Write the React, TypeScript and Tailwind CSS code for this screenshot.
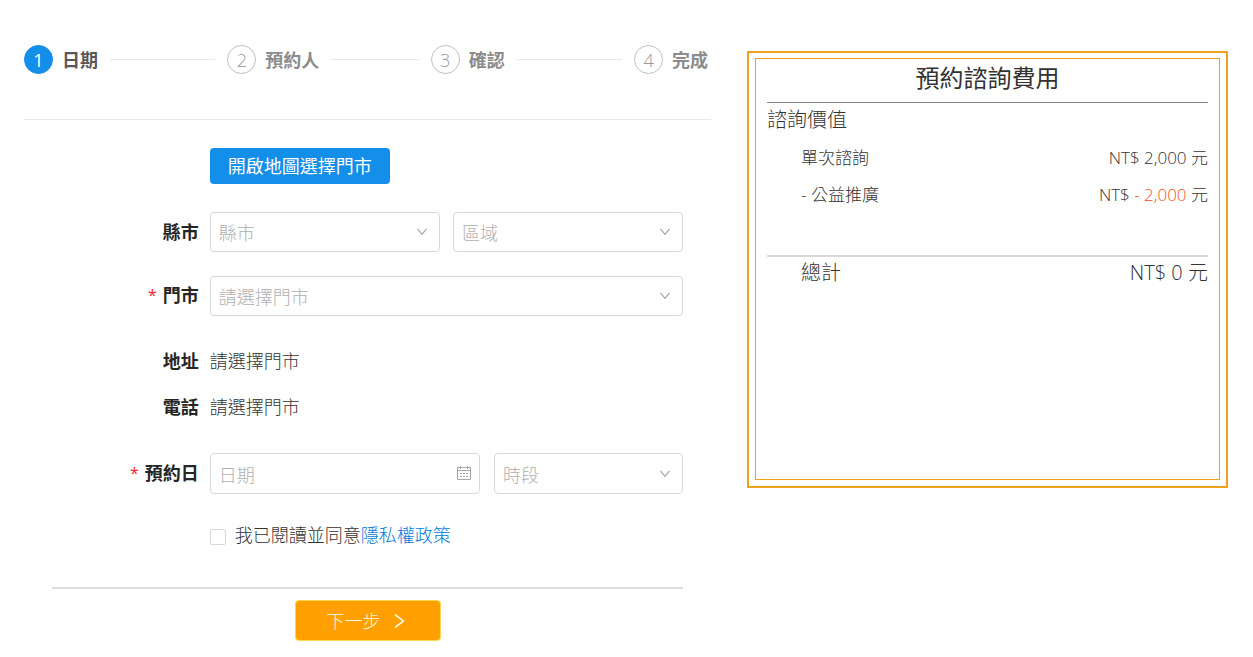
import clsx from "clsx";
import { useState } from "react";
import type { ReactNode } from "react";

const steps = ["日期", "預約人", "確認", "完成"];

const fieldClass =
  "w-full appearance-none rounded border border-[#d9d9d9] bg-white px-2 pt-0.5 font-light text-[#b0b0b0] outline-none transition focus:border-[#138ee9]";

function Steps({ current }: { current: number }) {
  return (
    <ol className="flex pr-[3px]">
      {steps.map((title, i) => (
        <li key={title} className={clsx("flex items-center", i < steps.length - 1 && "flex-1 basis-0")}>
          <span
            className={clsx(
              "flex size-[29px] shrink-0 items-center justify-center rounded-full border",
              i === current ? "border-[#138ee9] bg-[#138ee9] text-white" : "border-[#bfbfbf] font-light text-[#999999]"
            )}
          >
            {i + 1}
          </span>
          <span
            className={clsx(
              "ml-[9px] whitespace-nowrap font-bold",
              i === current ? "text-[#595959]" : "text-[#8c8c8c]"
            )}
          >
            {title}
          </span>
          {i < steps.length - 1 ? <span className="mx-3 h-px flex-1 bg-[#e8e8e8]" /> : null}
        </li>
      ))}
    </ol>
  );
}

function Row({ label, htmlFor, required, children }: { label?: string; htmlFor?: string; required?: boolean; children: ReactNode }) {
  return (
    <div className="grid grid-cols-[1fr_3fr] items-center">
      <div className="flex justify-end pr-[11px] font-bold text-[#262626]">
        {label ? (
          <label htmlFor={htmlFor} className={clsx("flex items-center gap-1.5", required && "pb-0.5")}>
            {required ? <span className="text-base font-normal leading-4 text-[#f5222d]">*</span> : null}
            {label}
          </label>
        ) : null}
      </div>
      {children}
    </div>
  );
}

function SelectBox({ id, placeholder, height = "h-10" }: { id: string; placeholder: string; height?: string }) {
  return (
    <div className="relative">
      <select id={id} aria-label={placeholder} defaultValue="" className={clsx(fieldClass, height)}>
        <option value="">{placeholder}</option>
      </select>
      <svg
        viewBox="0 0 12 12"
        fill="none"
        stroke="#a6a6a6"
        strokeWidth="1.2"
        className="pointer-events-none absolute right-3 top-1/2 size-3 -translate-y-1/2"
      >
        <path d="M1.5 2.8 6 8.4l4.5-5.6" />
      </svg>
    </div>
  );
}

function CalendarIcon() {
  return (
    <svg
      viewBox="0 0 16 16"
      fill="none"
      stroke="#a6a6a6"
      className="pointer-events-none absolute right-2 top-3 size-4"
    >
      <path d="M1.5 2.5h13v12h-13zM1.5 5.5h13M4.5 1v3M11.5 1v3" />
      <path d="M4 8.5h2M7 8.5h2M10 8.5h2M4 11.5h2M7 11.5h2M10 11.5h2" />
    </svg>
  );
}

function BookingForm() {
  const [agreed, setAgreed] = useState(false);

  return (
    <form className="px-7 pt-7" onSubmit={(e) => e.preventDefault()}>
      <Row>
        <div>
          <button type="button" className="h-9 rounded bg-[#138ee9] px-[18px] text-white">
            開啟地圖選擇門市
          </button>
        </div>
      </Row>
      <div className="mt-7 flex flex-col gap-6">
        <Row label="縣市" htmlFor="city">
          <div className="grid grid-cols-2 gap-[13px]">
            <SelectBox id="city" placeholder="縣市" />
            <SelectBox id="district" placeholder="區域" />
          </div>
        </Row>
        <Row label="門市" htmlFor="store" required>
          <SelectBox id="store" placeholder="請選擇門市" />
        </Row>
      </div>
      <div className="mb-8 mt-[31px] flex flex-col gap-[18px]">
        <Row label="地址">
          <p className="font-light text-[#333333]">請選擇門市</p>
        </Row>
        <Row label="電話">
          <p className="font-light text-[#333333]">請選擇門市</p>
        </Row>
      </div>
      <Row label="預約日" htmlFor="date" required>
        <div className="grid grid-cols-[10fr_7fr] gap-[14px]">
          <div className="relative">
            <input
              id="date"
              type="text"
              placeholder="日期"
              className={clsx(fieldClass, "h-[41px] placeholder:text-[#b0b0b0]")}
            />
            <CalendarIcon />
          </div>
          <SelectBox id="time" placeholder="時段" height="h-[41px]" />
        </div>
      </Row>
      <div className="mt-[27px]">
        <Row>
          <div className="flex items-end gap-[9px] font-light">
            <input
              id="agree"
              type="checkbox"
              checked={agreed}
              onChange={(e) => setAgreed(e.target.checked)}
              className="mb-1 size-4 appearance-none rounded-xs border border-[#d9d9d9] bg-white checked:border-[#138ee9] checked:bg-[#138ee9]"
            />
            <span>
              <label htmlFor="agree" className="text-[#333333]">我已閱讀並同意</label>
              <a href="#privacy" className="text-[#0079db]">隱私權政策</a>
            </span>
          </div>
        </Row>
      </div>
      <div className="mt-[38px] flex justify-center border-t-2 border-[#dcdcdc] pt-[11px]">
        <button
          type="submit"
          className="flex h-[41px] items-center gap-2.5 rounded border border-[#ffd84d] bg-[#ffa000] px-[31px] font-light text-[#fff8dc]"
        >
          下一步
          <svg viewBox="0 0 18 18" fill="none" stroke="currentColor" strokeWidth="1.6" className="size-[18px]">
            <path d="M4 2.5 12.5 9 4 15.5" />
          </svg>
        </button>
      </div>
    </form>
  );
}

function FeePanel() {
  return (
    <aside className="mt-[51px] flex min-h-[437px] flex-col self-start border-2 border-[#f0a020] px-1.5 pb-1.5 pt-[5px] text-[#333333]">
      <div className="flex-1 border border-[#f0a020] px-[11px]">
        <h2 className="border-b border-[#808080] pb-2 pt-[3px] text-center text-2xl leading-8">預約諮詢費用</h2>
        <h3 className="pt-[3px] text-xl font-light leading-7">諮詢價值</h3>
        <dl className="border-b-2 border-[#d9d9d9] pb-[42px] pt-[5px] text-[17px] font-light leading-[37px]">
          <div className="flex justify-between pl-[34px]">
            <dt>單次諮詢</dt>
            <dd>NT$ 2,000 元</dd>
          </div>
          <div className="flex justify-between pl-[34px]">
            <dt>- 公益推廣</dt>
            <dd>
              NT$ <span className="text-[#f4511e]">- 2,000</span> 元
            </dd>
          </div>
        </dl>
        <div className="flex justify-between pl-[34px] pt-0.5 text-xl font-light leading-7">
          <span>總計</span>
          <span>NT$ 0 元</span>
        </div>
      </div>
    </aside>
  );
}

export default function App() {
  return (
    <main className="grid min-h-screen grid-cols-[10fr_7fr] gap-9 bg-white pl-6 pr-[25px] font-['Open_Sans','Noto_Sans_CJK_TC',sans-serif] text-lg leading-7">
      <section className="pb-4 pt-[45px]">
        <Steps current={0} />
        <div className="mt-[45px] border-t border-[#e8e8e8]">
          <BookingForm />
        </div>
      </section>
      <FeePanel />
    </main>
  );
}
